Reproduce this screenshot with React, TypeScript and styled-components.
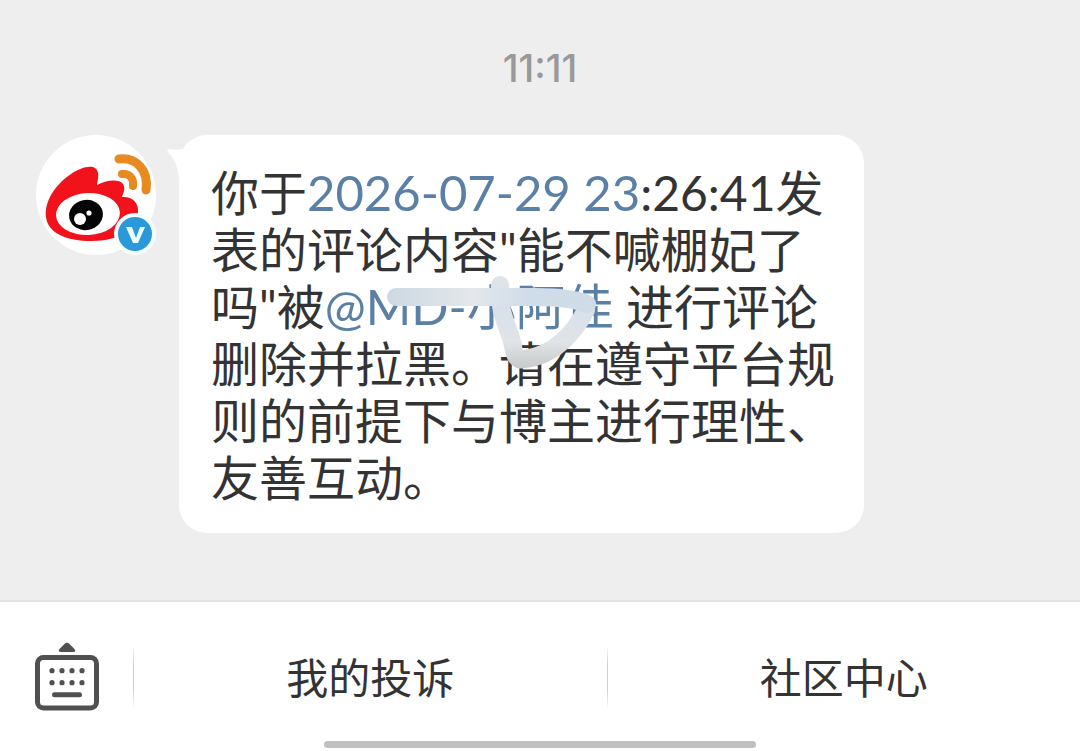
import styled, { createGlobalStyle } from 'styled-components'

const GlobalStyle = createGlobalStyle`
  * {
    box-sizing: border-box;
  }

  body {
    margin: 0;
    background: #eeeeee;
    color: #333333;
    font-family: Lato, 'Noto Sans CJK SC', sans-serif;
  }
`

const Page = styled.div`
  display: flex;
  flex-direction: column;
  min-height: 100vh;
`

const Chat = styled.main`
  flex: 1;
  padding: 44px 36px 66px;
`

const Time = styled.time`
  display: block;
  margin-bottom: 43px;
  text-align: center;
  font-family: Inter, sans-serif;
  font-size: 38px;
  font-weight: 500;
  line-height: 48px;
  color: #999999;
`

const Message = styled.div`
  display: flex;
  align-items: flex-start;
  gap: 23px;
`

const Avatar = styled.a`
  position: relative;
  flex: none;
  width: 120px;
  height: 120px;

  svg {
    display: block;
  }
`

const Bubble = styled.div`
  position: relative;
  max-width: 685px;
  padding: 29px 28px 27px 32px;
  border-radius: 28px;
  background: #ffffff;
`

const Tail = styled.svg`
  position: absolute;
  top: 12px;
  left: -13px;
`

const Text = styled.p`
  margin: 0;
  font-size: 48px;
  line-height: 57px;
`

const TextLink = styled.a`
  color: #5a80a6;
  font-size: 49px;
  line-height: 1;
  text-decoration: none;
`

const Scribble = styled.svg`
  position: absolute;
  top: 135px;
  left: 201px;
`

const Footer = styled.footer`
  border-top: 2px solid #e2e2e2;
  background: #ffffff;
`

const Menu = styled.nav`
  display: flex;
  align-items: center;
  height: 138px;
  padding-top: 12px;
`

const KeyboardButton = styled.button`
  flex: none;
  width: 133px;
  height: 72px;
  padding: 0 0 0 34px;
  border: 0;
  background: none;

  svg {
    display: block;
  }
`

const Divider = styled.span`
  flex: none;
  width: 1px;
  height: 64px;
  background: linear-gradient(#ffffff, #cfcfcf 30%, #cfcfcf 70%, #ffffff);
`

const MenuButton = styled.button`
  flex: 1;
  padding: 2px 0 0;
  border: 0;
  background: none;
  color: #333333;
  font-family: inherit;
  font-size: 42px;
  line-height: 60px;
`

const HomeBar = styled.div`
  width: 40%;
  height: 7px;
  margin: 1px auto 3px;
  border-radius: 4px;
  background: #c0c0c0;
`

function WeiboLogo() {
  return (
    <svg width="120" height="120" viewBox="0 0 120 120" aria-hidden="true">
      <circle cx="60" cy="60" r="60" fill="#ffffff" />
      <path
        d="M10 82C8 66 20 49 35 39C44 33 54 30 59 33C64 37 62 43 61 50C69 46 82 43 87 49C90 54 87 58 86 62C95 61 103 67 102 77C101 94 84 106 56 106C30 106 12 98 10 82Z"
        fill="#f1121b"
      />
      <ellipse cx="52" cy="79" rx="32" ry="21" fill="#ffffff" transform="rotate(-3 52 79)" />
      <ellipse cx="50" cy="80" rx="17" ry="15" fill="#050505" transform="rotate(-12 50 80)" />
      <circle cx="44" cy="84" r="6" fill="#ffffff" />
      <circle cx="53" cy="78" r="2.6" fill="#ffffff" />
      <path
        d="M83 24C100 22 113 35 110 55"
        fill="none"
        stroke="#e78a20"
        strokeWidth="9"
        strokeLinecap="round"
      />
      <path
        d="M86 39C94 38 98 44 97 51"
        fill="none"
        stroke="#e78a20"
        strokeWidth="8"
        strokeLinecap="round"
      />
      <circle cx="99" cy="99" r="21" fill="#f4feff" />
      <circle cx="99" cy="99" r="17" fill="#2b98d9" />
      <path d="M90 92H96L100 103L104 92H109L102 108H97Z" fill="#e9ffff" />
    </svg>
  )
}

function KeyboardIcon() {
  const dots = [18, 28, 38, 48]

  return (
    <svg width="66" height="70" viewBox="0 0 66 70" fill="#505050" aria-hidden="true">
      <path d="M31 1.5Q33 -0.2 35 1.5L40.5 7Q42.5 10 39 10H27Q23.5 10 25.5 7Z" />
      <rect x="3.5" y="15.5" width="59" height="50.5" rx="6" fill="none" stroke="#505050" strokeWidth="5" />
      {dots.map(x => (
        <g key={x}>
          <circle cx={x} cy="28.7" r="2.6" />
          <circle cx={x} cy="40.7" r="2.6" />
        </g>
      ))}
      <rect x="18" y="50.2" width="30" height="5" rx="2.5" />
    </svg>
  )
}

function MosaicStroke() {
  return (
    <Scribble width="230" height="110" viewBox="0 0 230 110" aria-hidden="true">
      <defs>
        <linearGradient id="across" x1="0" y1="0" x2="230" y2="0" gradientUnits="userSpaceOnUse">
          <stop offset="0" stopColor="#cbd7e1" />
          <stop offset="0.4" stopColor="#e3e7eb" />
          <stop offset="0.65" stopColor="#cfdce9" />
          <stop offset="1" stopColor="#d0dce8" />
        </linearGradient>
        <linearGradient id="down" x1="0" y1="0" x2="0" y2="110" gradientUnits="userSpaceOnUse">
          <stop offset="0" stopColor="#e2e5e8" />
          <stop offset="0.35" stopColor="#d8e1ea" />
          <stop offset="0.65" stopColor="#e0e4e8" />
          <stop offset="0.95" stopColor="#c3c3c4" />
        </linearGradient>
      </defs>
      <g fill="none" strokeLinecap="round" strokeLinejoin="round" strokeWidth="18">
        <path d="M120 15C118 45 130 58 133 76Q135 92 144 89C174 86 195 62 206 40" stroke="url(#down)" />
        <path d="M16 27H155C180 27 195 29 207 34" stroke="url(#across)" />
      </g>
    </Scribble>
  )
}

export default function App() {
  return (
    <Page>
      <GlobalStyle />
      <Chat>
        <Time>11:11</Time>
        <Message>
          <Avatar href="#" aria-label="微博">
            <WeiboLogo />
          </Avatar>
          <Bubble>
            <Tail width="22" height="36" viewBox="0 0 22 36" aria-hidden="true">
              <path d="M3 2C1 2 1 4 2 5C9 12 13 22 13 36H22V0Q16 4 3 2Z" fill="#ffffff" />
            </Tail>
            <Text>
              你于<TextLink href="#">2026-07-29 23</TextLink>:26:41发表的评论内容"能不喊棚妃了吗"被
              <TextLink href="#">@MD-小阿佳</TextLink> 进行评论删除并拉黑。请在遵守平台规则的前提下与博主进行理性、友善互动。
            </Text>
            <MosaicStroke />
          </Bubble>
        </Message>
      </Chat>
      <Footer>
        <Menu>
          <KeyboardButton type="button" aria-label="键盘">
            <KeyboardIcon />
          </KeyboardButton>
          <Divider />
          <MenuButton type="button">我的投诉</MenuButton>
          <Divider />
          <MenuButton type="button">社区中心</MenuButton>
        </Menu>
        <HomeBar />
      </Footer>
    </Page>
  )
}
